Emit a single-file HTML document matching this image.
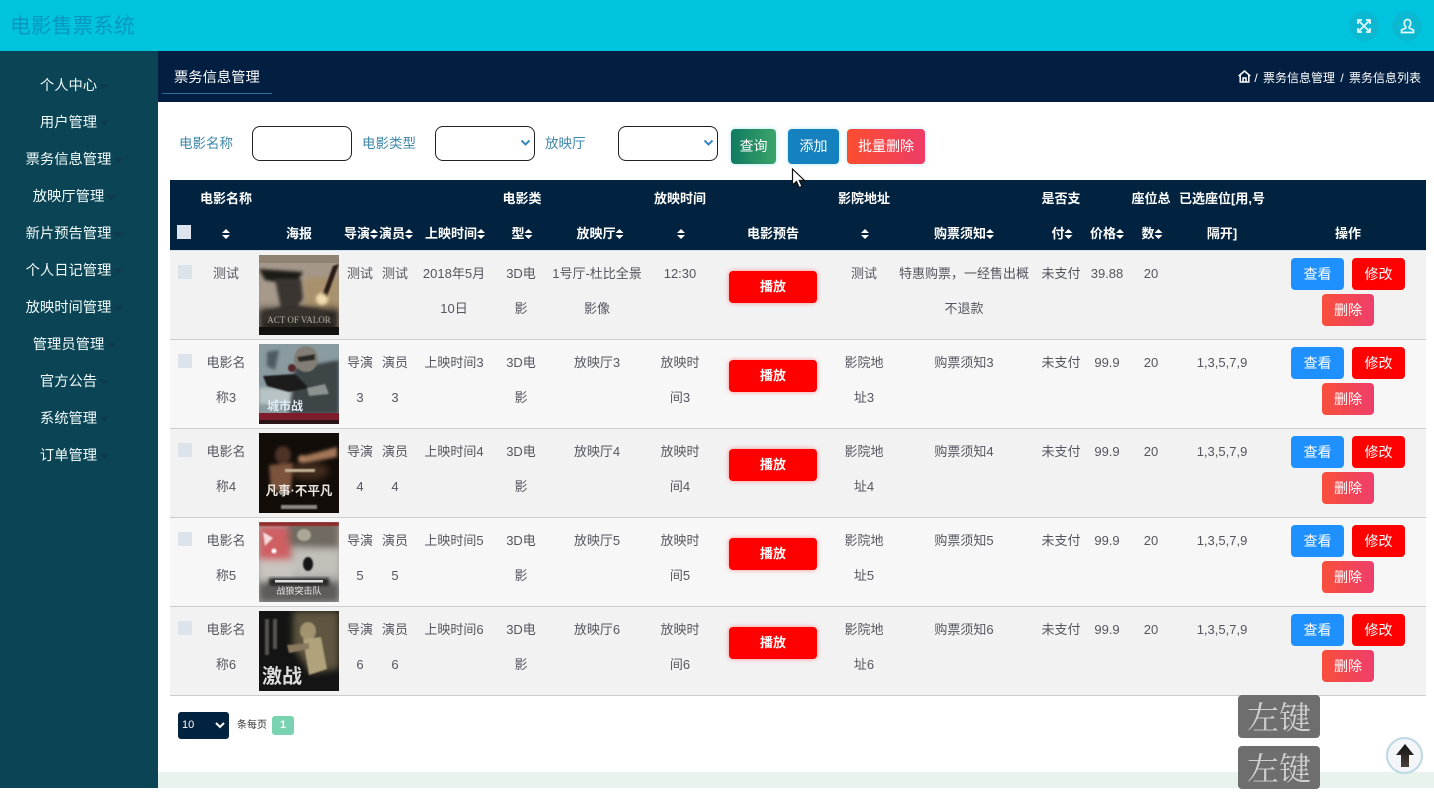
<!DOCTYPE html>
<html lang="zh-CN">
<head>
<meta charset="utf-8">
<title>电影售票系统</title>
<style>
*{box-sizing:border-box;margin:0;padding:0}
html,body{width:1434px;height:788px;overflow:hidden;background:#fff;font-family:"Liberation Sans","Noto Sans CJK SC",sans-serif;font-size:14px;color:#55555f}
.a{position:absolute}
.c{position:absolute;transform:translateX(-50%);white-space:nowrap;line-height:20px;font-size:13px;margin-top:1px}
#top{left:0;top:0;width:1434px;height:51px;background:#00c4de}
#title{left:10px;top:12px;font-size:20.8px;line-height:30px;color:#0896c2;white-space:nowrap}
.circ{width:30px;height:30px;border-radius:50%;background:#0ab8d2;top:11px}
#side{left:0;top:51px;width:158px;height:737px;background:#0b4555}
.m{position:absolute;transform:translateX(-50%);left:68.5px;margin-top:1px;color:#f2fbfb;line-height:20px;white-space:nowrap;font-size:14.3px}
.m i{position:absolute;left:100%;top:8px;margin-left:2px;width:0;height:0;border:5px solid transparent;border-top:5px solid #0d3b4b;border-bottom:0}
#sub{left:158px;top:51px;width:1276px;height:51px;background:#021f41}
#foot{left:158px;top:772px;width:1276px;height:16px;background:#e8f3ee}
.lb{position:absolute;color:#3d87a8;line-height:20px;white-space:nowrap;font-size:13.5px;margin-top:1px}
.in{position:absolute;top:126px;height:35px;width:100px;background:#fff;border:1px solid #222;border-radius:8px}
.b{position:absolute;text-align:center;color:#fff;white-space:nowrap;border-radius:4px}
#th{left:170px;top:180px;width:1256px;height:71px;background:#02233f;border-bottom:1px solid #d5e2ea}
.h{position:absolute;transform:translateX(-50%);white-space:nowrap;color:#fff;font-weight:700;font-size:13px;line-height:20px;margin-top:1px}
.h svg{vertical-align:-1px}
.r{position:absolute;left:170px;width:1256px;height:89px;border-bottom:1px solid #ccc}
.o{background:#f2f2f3}.e{background:#f7f7f8}
.ck{position:absolute;left:8px;top:14px;width:14px;height:14px;background:#dde3ea}
.p{position:absolute;left:89px;top:4px;width:80px;height:80px;display:block}
.play{left:559px;top:20px;width:88px;height:32px;line-height:32px;background:#f00;box-shadow:0 0 5px rgba(255,60,60,.55);font-weight:700;font-size:13px}
.v,.x,.d{height:32px;line-height:32px}
.v{left:1121px;top:7px;width:53px;background:#1e90ff}
.x{left:1182px;top:7px;width:53px;background:#f00}
.d{left:1152px;top:43px;width:52px;background:linear-gradient(90deg,#f94f3c,#ee3e6a)}
.k{position:absolute;left:1238px;width:82px;height:43px;background:#6e6e6e;border-radius:4px;color:#cfcfcf;font-family:"Liberation Serif","Noto Serif CJK SC",serif;font-size:32px;line-height:46px;text-align:center;white-space:nowrap}
</style>
</head>
<body>
<svg width="0" height="0" style="position:absolute"><defs>
<filter id="b0" x="-20%" y="-20%" width="140%" height="140%"><feGaussianBlur stdDeviation=".7"/></filter>
<filter id="b1" x="-20%" y="-20%" width="140%" height="140%"><feGaussianBlur stdDeviation="1.6"/></filter>
<filter id="b2" x="-20%" y="-20%" width="140%" height="140%"><feGaussianBlur stdDeviation="3.5"/></filter>
<symbol id="s" viewBox="0 0 8 10"><path d="M4 0 8 4H0zM0 6h8L4 10z" fill="#fff"/></symbol>
</defs></svg>

<div class="a" id="top"></div>
<div class="a" id="title">电影售票系统</div>
<div class="a circ" style="left:1349px"></div>
<svg class="a" style="left:1357px;top:19px" width="14" height="14" viewBox="0 0 14 14" fill="none" stroke="#dff8fb" stroke-width="1.8"><path d="M1 5V1h4M9 1h4v4M13 9v4H9M5 13H1V9M2 2l10 10M12 2 2 12"/></svg>
<div class="a circ" style="left:1392px"></div>
<svg class="a" style="left:1400px;top:18px" width="15" height="16" viewBox="0 0 15 16" fill="none" stroke="#e6fafc" stroke-width="1.7"><path d="M7.5 1.5c-2 0-3.2 1.500-3.200 3.600 0 1.500.6 2.800 1.500 3.600v1.300L1.500 12v2.500h12V12l-4.300-2V8.700c.9-.8 1.500-2.100 1.500-3.600 0-2.100-1.200-3.600-3.200-3.600z"/></svg>

<div class="a" id="side"></div>
<div class="m" style="top:75px">个人中心<i></i></div>
<div class="m" style="top:112px">用户管理<i></i></div>
<div class="m" style="top:149px">票务信息管理<i></i></div>
<div class="m" style="top:186px">放映厅管理<i></i></div>
<div class="m" style="top:223px">新片预告管理<i></i></div>
<div class="m" style="top:260px">个人日记管理<i></i></div>
<div class="m" style="top:297px">放映时间管理<i></i></div>
<div class="m" style="top:334px">管理员管理<i></i></div>
<div class="m" style="top:371px">官方公告<i></i></div>
<div class="m" style="top:408px">系统管理<i></i></div>
<div class="m" style="top:445px">订单管理<i></i></div>

<div class="a" id="sub"></div>
<div class="a" style="left:174px;top:68px;color:#fff;line-height:20px;white-space:nowrap;font-size:14.3px">票务信息管理</div>
<div class="a" style="left:162px;top:93px;width:110px;height:1px;background:#2a6f9a"></div>
<svg class="a" style="left:1238px;top:70px" width="13" height="13" viewBox="0 0 13 13" fill="none" stroke="#fff" stroke-width="1.500"><path d="M.7 6 6.500 1l5.800 5M2.200 5v7h8.600V5M5 12V8h3v4"/></svg>
<div class="a" style="right:13px;top:68px;color:#fff;font-size:12px;line-height:20px;white-space:nowrap;word-spacing:2px">/ 票务信息管理 / 票务信息列表</div>

<div class="lb" style="left:179px;top:133px">电影名称</div>
<div class="in" style="left:252px"></div>
<div class="lb" style="left:362px;top:133px">电影类型</div>
<div class="in" style="left:435px"></div>
<svg class="a" style="left:520px;top:139px" width="11" height="8" viewBox="0 0 11 8" fill="none" stroke="#3a86c0" stroke-width="2"><path d="m1.500 1.500 4 4 4-4"/></svg>
<div class="lb" style="left:545px;top:133px">放映厅</div>
<div class="in" style="left:618px"></div>
<svg class="a" style="left:703px;top:139px" width="11" height="8" viewBox="0 0 11 8" fill="none" stroke="#3a86c0" stroke-width="2"><path d="m1.500 1.500 4 4 4-4"/></svg>
<div class="b" style="left:731px;top:129px;width:45px;height:35px;line-height:35px;background:linear-gradient(90deg,#0f7a60,#3ca56a);box-shadow:0 0 4px rgba(120,210,240,.6)">查询</div>
<div class="b" style="left:788px;top:129px;width:51px;height:35px;line-height:35px;background:#1681bf;box-shadow:0 0 4px rgba(120,210,240,.6)">添加</div>
<div class="b" style="left:847px;top:129px;width:78px;height:35px;line-height:35px;background:linear-gradient(90deg,#fb4e2f,#ee3c67);box-shadow:0 0 4px rgba(120,210,240,.5)">批量删除</div>

<div class="a" id="th"></div>
<div class="a" style="left:177px;top:225px;width:14px;height:14px;background:#dde3ea"></div>
<div class="h" style="left:226px;top:188px">电影名称</div>
<div class="h" style="left:226px;top:223px"><svg width="8" height="10"><use href="#s"/></svg></div>
<div class="h" style="left:299px;top:223px">海报</div>
<div class="h" style="left:361px;top:223px">导演<svg width="8" height="10"><use href="#s"/></svg></div>
<div class="h" style="left:396px;top:223px">演员<svg width="8" height="10"><use href="#s"/></svg></div>
<div class="h" style="left:455px;top:223px">上映时间<svg width="8" height="10"><use href="#s"/></svg></div>
<div class="h" style="left:522px;top:188px">电影类</div>
<div class="h" style="left:522px;top:223px">型<svg width="8" height="10"><use href="#s"/></svg></div>
<div class="h" style="left:600px;top:223px">放映厅<svg width="8" height="10"><use href="#s"/></svg></div>
<div class="h" style="left:680px;top:188px">放映时间</div>
<div class="h" style="left:681px;top:223px"><svg width="8" height="10"><use href="#s"/></svg></div>
<div class="h" style="left:773px;top:223px">电影预告</div>
<div class="h" style="left:864px;top:188px">影院地址</div>
<div class="h" style="left:865px;top:223px"><svg width="8" height="10"><use href="#s"/></svg></div>
<div class="h" style="left:964px;top:223px">购票须知<svg width="8" height="10"><use href="#s"/></svg></div>
<div class="h" style="left:1061px;top:188px">是否支</div>
<div class="h" style="left:1062px;top:223px">付<svg width="8" height="10"><use href="#s"/></svg></div>
<div class="h" style="left:1107px;top:223px">价格<svg width="8" height="10"><use href="#s"/></svg></div>
<div class="h" style="left:1151px;top:188px">座位总</div>
<div class="h" style="left:1152px;top:223px">数<svg width="8" height="10"><use href="#s"/></svg></div>
<div class="h" style="left:1222px;top:188px">已选座位[用,号</div>
<div class="h" style="left:1222px;top:223px">隔开]</div>
<div class="h" style="left:1348px;top:223px">操作</div>

<!-- row 1 -->
<div class="r o" style="top:251px">
<div class="ck"></div><div class="c" style="left:56px;top:12px">测试</div>
<svg class="p" viewBox="0 0 80 80"><rect width="80" height="80" fill="#a4978a"/><rect y="0" width="80" height="8" fill="#8f8374"/><g filter="url(#b2)"><rect x="45" y="22" width="35" height="36" fill="#a8916c"/><rect x="0" y="26" width="18" height="30" fill="#a69a8c"/><path d="M0 52H80V80H0z" fill="#2c2724"/></g><g filter="url(#b1)"><path d="M0 14 44 17 36 30 6 25z" fill="#1d1a18"/><path d="M16 24H42L44 44 36 54H22z" fill="#3a3431"/><path d="M6 56 34 50 60 54 76 66H4z" fill="#38322d"/></g><path d="M80 9 74 11 63 41 67 44z" fill="#2a1e14" filter="url(#b0)"/><circle cx="63" cy="44" r="6" fill="#f2dcae" filter="url(#b1)"/><rect y="72" width="80" height="8" fill="#141211"/><text x="40" y="68" font-size="9" font-family="Liberation Serif,serif" fill="#b3aca0" text-anchor="middle">ACT OF VALOR</text></svg>
<div class="c" style="left:190px;top:12px">测试</div><div class="c" style="left:225px;top:12px">测试</div>
<div class="c" style="left:284px;top:12px">2018年5月</div><div class="c" style="left:284px;top:47px">10日</div>
<div class="c" style="left:351px;top:12px">3D电</div><div class="c" style="left:351px;top:47px">影</div>
<div class="c" style="left:427px;top:12px">1号厅-杜比全景</div><div class="c" style="left:427px;top:47px">影像</div>
<div class="c" style="left:510px;top:12px">12:30</div>
<div class="b play">播放</div>
<div class="c" style="left:694px;top:12px">测试</div>
<div class="c" style="left:794px;top:12px">特惠购票，一经售出概</div><div class="c" style="left:794px;top:47px">不退款</div>
<div class="c" style="left:891px;top:12px">未支付</div><div class="c" style="left:937px;top:12px">39.88</div><div class="c" style="left:981px;top:12px">20</div>
<div class="b v">查看</div><div class="b x">修改</div><div class="b d">删除</div>
</div>

<!-- row 2 -->
<div class="r e" style="top:340px">
<div class="ck"></div><div class="c" style="left:56px;top:12px">电影名</div><div class="c" style="left:56px;top:47px">称3</div>
<svg class="p" viewBox="0 0 80 80"><rect width="80" height="80" fill="#8a9ba0"/><rect y="44" width="40" height="16" fill="#b7c3c4" filter="url(#b1)"/><g filter="url(#b1)"><path d="M36 24 80 16V70H30z" fill="#3c4546"/><path d="M8 8 20 6 16 26 8 22z" fill="#4d5a5e"/></g><g filter="url(#b0)"><ellipse cx="47" cy="15" rx="12" ry="13" fill="#827e74"/><path d="M38 13 56 10 56 16 40 18z" fill="#2a2a28"/><path d="M4 32 36 30 50 44 30 48 8 42z" fill="#1c1e1f"/><circle cx="33" cy="24" r="4" fill="#552526"/><path d="M48 44 66 40 70 50 50 52z" fill="#8c9290"/></g><rect y="69" width="80" height="11" fill="#7d1d2b"/><rect y="76" width="80" height="4" fill="#2b1216"/><text x="26" y="66" font-size="12" font-weight="700" fill="#dfeaf2" text-anchor="middle">城市战</text></svg>
<div class="c" style="left:190px;top:12px">导演</div><div class="c" style="left:190px;top:47px">3</div><div class="c" style="left:225px;top:12px">演员</div><div class="c" style="left:225px;top:47px">3</div>
<div class="c" style="left:284px;top:12px">上映时间3</div>
<div class="c" style="left:351px;top:12px">3D电</div><div class="c" style="left:351px;top:47px">影</div>
<div class="c" style="left:427px;top:12px">放映厅3</div>
<div class="c" style="left:510px;top:12px">放映时</div><div class="c" style="left:510px;top:47px">间3</div>
<div class="b play">播放</div>
<div class="c" style="left:694px;top:12px">影院地</div><div class="c" style="left:694px;top:47px">址3</div>
<div class="c" style="left:794px;top:12px">购票须知3</div>
<div class="c" style="left:891px;top:12px">未支付</div><div class="c" style="left:937px;top:12px">99.9</div><div class="c" style="left:981px;top:12px">20</div><div class="c" style="left:1052px;top:12px">1,3,5,7,9</div>
<div class="b v">查看</div><div class="b x">修改</div><div class="b d">删除</div>
</div>

<!-- row 3 -->
<div class="r o" style="top:429px">
<div class="ck"></div><div class="c" style="left:56px;top:12px">电影名</div><div class="c" style="left:56px;top:47px">称4</div>
<svg class="p" viewBox="0 0 80 80"><rect width="80" height="80" fill="#130d09"/><ellipse cx="50" cy="38" rx="20" ry="9" fill="#3f2c1b" filter="url(#b2)"/><g filter="url(#b1)"><ellipse cx="24" cy="22" rx="8" ry="9" fill="#4e3326"/><path d="M10 32 34 30 32 58H12z" fill="#7b533c"/><path d="M40 24 56 20 78 14 78 24 46 30z" fill="#a27656"/><circle cx="43" cy="26" r="4" fill="#ab7f5e"/></g><rect x="26" y="36" width="30" height="3" fill="#c7b79a" filter="url(#b0)"/><text x="40" y="62" font-size="12.500" font-weight="700" fill="#e9e4de" text-anchor="middle">凡事·不平凡</text><rect x="22" y="72" width="36" height="4" fill="#8d8a85" filter="url(#b0)"/></svg>
<div class="c" style="left:190px;top:12px">导演</div><div class="c" style="left:190px;top:47px">4</div><div class="c" style="left:225px;top:12px">演员</div><div class="c" style="left:225px;top:47px">4</div>
<div class="c" style="left:284px;top:12px">上映时间4</div>
<div class="c" style="left:351px;top:12px">3D电</div><div class="c" style="left:351px;top:47px">影</div>
<div class="c" style="left:427px;top:12px">放映厅4</div>
<div class="c" style="left:510px;top:12px">放映时</div><div class="c" style="left:510px;top:47px">间4</div>
<div class="b play">播放</div>
<div class="c" style="left:694px;top:12px">影院地</div><div class="c" style="left:694px;top:47px">址4</div>
<div class="c" style="left:794px;top:12px">购票须知4</div>
<div class="c" style="left:891px;top:12px">未支付</div><div class="c" style="left:937px;top:12px">99.9</div><div class="c" style="left:981px;top:12px">20</div><div class="c" style="left:1052px;top:12px">1,3,5,7,9</div>
<div class="b v">查看</div><div class="b x">修改</div><div class="b d">删除</div>
</div>

<!-- row 4 -->
<div class="r e" style="top:518px">
<div class="ck"></div><div class="c" style="left:56px;top:12px">电影名</div><div class="c" style="left:56px;top:47px">称5</div>
<svg class="p" viewBox="0 0 80 80"><rect width="80" height="80" fill="#a8a6a2"/><g filter="url(#b2)"><rect x="0" y="4" width="32" height="36" fill="#cf5f64"/><rect x="0" y="38" width="36" height="20" fill="#c9c4c0"/><path d="M28 0H80V26L30 24z" fill="#6f6b60"/><path d="M34 28H80V54H38z" fill="#c3c0ba"/><rect y="60" width="80" height="20" fill="#5d5b5a"/></g><rect width="80" height="4" fill="#8f2a2a" filter="url(#b0)"/><g filter="url(#b0)"><path d="M4 10 14 16 6 24z" fill="#f3dcdc"/><circle cx="15" cy="29" r="2.500" fill="#fff"/><ellipse cx="45" cy="13" rx="7" ry="6" fill="#aaa796"/><ellipse cx="49" cy="42" rx="5" ry="7" fill="#141414"/></g><rect x="10" y="56" width="60" height="8" fill="#252525" filter="url(#b1)"/><rect x="16" y="58" width="48" height="2.500" fill="#e0e0e0"/><text x="40" y="72" font-size="9" fill="#e4e4e4" text-anchor="middle">战狼突击队</text></svg>
<div class="c" style="left:190px;top:12px">导演</div><div class="c" style="left:190px;top:47px">5</div><div class="c" style="left:225px;top:12px">演员</div><div class="c" style="left:225px;top:47px">5</div>
<div class="c" style="left:284px;top:12px">上映时间5</div>
<div class="c" style="left:351px;top:12px">3D电</div><div class="c" style="left:351px;top:47px">影</div>
<div class="c" style="left:427px;top:12px">放映厅5</div>
<div class="c" style="left:510px;top:12px">放映时</div><div class="c" style="left:510px;top:47px">间5</div>
<div class="b play">播放</div>
<div class="c" style="left:694px;top:12px">影院地</div><div class="c" style="left:694px;top:47px">址5</div>
<div class="c" style="left:794px;top:12px">购票须知5</div>
<div class="c" style="left:891px;top:12px">未支付</div><div class="c" style="left:937px;top:12px">99.9</div><div class="c" style="left:981px;top:12px">20</div><div class="c" style="left:1052px;top:12px">1,3,5,7,9</div>
<div class="b v">查看</div><div class="b x">修改</div><div class="b d">删除</div>
</div>

<!-- row 5 -->
<div class="r o" style="top:607px">
<div class="ck"></div><div class="c" style="left:56px;top:12px">电影名</div><div class="c" style="left:56px;top:47px">称6</div>
<svg class="p" viewBox="0 0 80 80"><rect width="80" height="80" fill="#141414"/><path d="M34 0H80V58L52 62 34 36z" fill="#5f553f" filter="url(#b2)"/><g filter="url(#b0)"><ellipse cx="49" cy="20" rx="8" ry="9" fill="#a2936f"/><path d="M44 28 62 26 68 58 50 64z" fill="#b0a37c"/><path d="M28 34 50 32 50 38 30 42z" fill="#88795f"/></g><path d="M6 8h4v36H6zM14 8h4v30h-4z" fill="#55534e" filter="url(#b0)"/><text x="23" y="72" font-size="20" font-weight="700" fill="#dcdcdc" text-anchor="middle">激战</text></svg>
<div class="c" style="left:190px;top:12px">导演</div><div class="c" style="left:190px;top:47px">6</div><div class="c" style="left:225px;top:12px">演员</div><div class="c" style="left:225px;top:47px">6</div>
<div class="c" style="left:284px;top:12px">上映时间6</div>
<div class="c" style="left:351px;top:12px">3D电</div><div class="c" style="left:351px;top:47px">影</div>
<div class="c" style="left:427px;top:12px">放映厅6</div>
<div class="c" style="left:510px;top:12px">放映时</div><div class="c" style="left:510px;top:47px">间6</div>
<div class="b play">播放</div>
<div class="c" style="left:694px;top:12px">影院地</div><div class="c" style="left:694px;top:47px">址6</div>
<div class="c" style="left:794px;top:12px">购票须知6</div>
<div class="c" style="left:891px;top:12px">未支付</div><div class="c" style="left:937px;top:12px">99.9</div><div class="c" style="left:981px;top:12px">20</div><div class="c" style="left:1052px;top:12px">1,3,5,7,9</div>
<div class="b v">查看</div><div class="b x">修改</div><div class="b d">删除</div>
</div>

<!-- pagination -->
<div class="a" style="left:178px;top:712px;width:51px;height:27px;background:#02233f;border-radius:3px;color:#fff;font-size:11px;line-height:27px;padding-left:4px">10</div>
<svg class="a" style="left:215px;top:722px" width="10" height="7" viewBox="0 0 10 7" fill="none" stroke="#fff" stroke-width="2"><path d="m1 1 4 4 4-4"/></svg>
<div class="a" style="left:237px;top:716px;font-size:10px;line-height:20px;color:#333;white-space:nowrap">条每页</div>
<div class="a" style="left:272px;top:716px;width:22px;height:19px;background:#79d2b0;border-radius:3px;color:#fff;font-size:11px;font-weight:700;line-height:19px;text-align:center">1</div>

<div class="a" id="foot"></div>

<!-- overlays -->
<div class="k" style="top:695px">左键</div>
<div class="k" style="top:746px">左键</div>
<div class="a" style="left:1386px;top:737px;width:37px;height:37px;border-radius:50%;background:#f3f5f8;border:2px solid #bcd8e2"></div>
<svg class="a" style="left:1394px;top:743px" width="22" height="25" viewBox="0 0 22 25"><defs><linearGradient id="ar" x1="0" y1="0" x2="0" y2="1"><stop offset="0" stop-color="#111"/><stop offset="1" stop-color="#4a4038"/></linearGradient></defs><path d="M11 1 20 12H15V24H7V12H2z" fill="url(#ar)"/></svg>
<svg class="a" style="left:791px;top:168px" width="16" height="21" viewBox="0 0 16 21"><path d="M1.500 1V17L5.500 13.500 8.200 19.500 11 18.300 8.300 12.500H13.500z" fill="#fff" stroke="#111" stroke-width="1.200"/></svg>
</body>
</html>
